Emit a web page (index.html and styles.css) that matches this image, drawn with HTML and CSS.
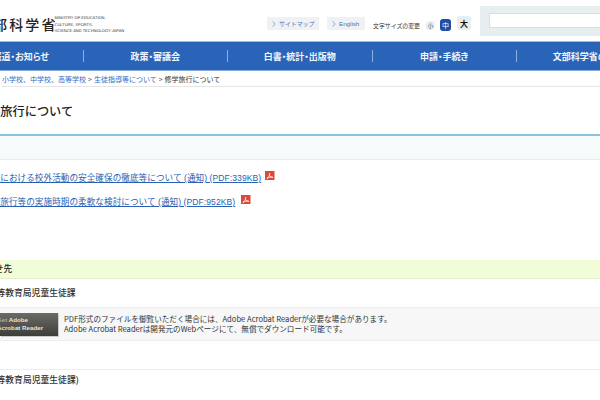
FILE: index.html
```html
<!DOCTYPE html>
<html lang="ja">
<head>
<meta charset="utf-8">
<title>修学旅行について</title>
<link rel="stylesheet" href="styles.css">
</head>
<body>
<div class="page">
  <header class="header">
    <div class="logo">
      <span class="logo-mark">文部科学省</span>
      <span class="logo-en">MINISTRY OF EDUCATION,<br>CULTURE, SPORTS,<br>SCIENCE AND TECHNOLOGY-JAPAN</span>
    </div>
    <a class="tool tool-map"><svg class="chev" viewBox="0 0 4 6"><path d="M.6.4 3.2 3 .6 5.6"/></svg>サイトマップ</a>
    <a class="tool tool-en"><svg class="chev" viewBox="0 0 4 6"><path d="M.6.4 3.2 3 .6 5.6"/></svg>English</a>
    <span class="size-label">文字サイズの変更</span>
    <span class="size size-s">小</span>
    <span class="size size-m">中</span>
    <span class="size size-l">大</span>
    <div class="search"><div class="search-input"></div></div>
  </header>
  <nav class="nav">
    <a class="nav-item">報道・お知らせ</a>
    <a class="nav-item">政策・審議会</a>
    <a class="nav-item">白書・統計・出版物</a>
    <a class="nav-item">申請・手続き</a>
    <a class="nav-item">文部科学省の紹介</a>
  </nav>
  <div class="crumbs"><a>小学校、中学校、高等学校</a><span class="sep">&gt;</span><a>生徒指導等について</a><span class="sep">&gt;</span><span>修学旅行について</span></div>
  <h1 class="title">修学旅行について</h1>
  <div class="band"></div>
  <ul class="links">
    <li class="link-a"><a>学校における校外活動の安全確保の徹底等について (通知) (PDF:339KB)</a><svg class="pdf" viewBox="0 0 10 10"><rect width="10" height="10" fill="#dc4a38"/><path d="M5 2.2C5 5 3.6 7 1.8 8M5 4.8c.6 1.2 2 2 3.4 2.2M2 7.6c2-1 4-1.5 6.2-1.2" fill="none" stroke="#fff" stroke-width=".9"/></svg></li>
    <li class="link-b"><a>修学旅行等の実施時期の柔軟な検討について (通知) (PDF:952KB)</a><svg class="pdf pdf-wide" viewBox="0 0 10 10"><rect width="10" height="10" fill="#dc4a38"/><path d="M5 2.2C5 5 3.6 7 1.8 8M5 4.8c.6 1.2 2 2 3.4 2.2M2 7.6c2-1 4-1.5 6.2-1.2" fill="none" stroke="#fff" stroke-width=".9"/></svg></li>
  </ul>
  <h2 class="contact">お問合せ先</h2>
  <p class="dept dept-a">初等中等教育局児童生徒課</p>
  <div class="reader">
    <div class="badge"><span class="badge-text"><span class="dim">Get</span> Adobe<br>Acrobat Reader</span></div>
    <p class="reader-text">PDF形式のファイルを御覧いただく場合には、Adobe Acrobat Readerが必要な場合があります。<br>Adobe Acrobat Readerは開発元のWebページにて、無償でダウンロード可能です。</p>
  </div>
  <p class="dept dept-b">(初等中等教育局児童生徒課)</p>
</div>
</body>
</html>
```
FILE: styles.css
```css
* { box-sizing: border-box; margin: 0; padding: 0; }
html, body { width: 600px; height: 400px; overflow: hidden; background: #fff; }
body { font-family: "Noto Sans CJK JP", "Liberation Sans", sans-serif; color: #333; }
.page { width: 600px; height: 400px; overflow: hidden; }

.header { height: 41px; width: 640px; display: flex; align-items: flex-start; }
.logo { width: 290px; margin-left: -23px; padding-top: 15px; display: flex; flex: none; }
.logo-mark { font-size: 14px; line-height: 18px; letter-spacing: 2.1px; color: #222; font-weight: 500; white-space: nowrap; }
.logo-en { font-size: 4px; line-height: 6.5px; margin-left: -3px; color: #333; font-family: "Liberation Sans", sans-serif; font-weight: 400; text-rendering: geometricPrecision; white-space: nowrap; }
.tool { margin-top: 17px; height: 13px; background: #eff1f3; color: #4d78c0; font-size: 5.9px; line-height: 13px; display: flex; align-items: center; gap: 3px; padding-left: 5px; white-space: nowrap; flex: none; }
.tool-map { width: 52px; margin-right: 8px; overflow: hidden; }
.tool-en { width: 38px; font-family: "Liberation Sans", sans-serif; font-size: 6.2px; }
.chev { width: 4px; height: 6px; fill: none; stroke: #6a8ac8; stroke-width: .7; flex: none; }
.size-label { margin: 21px 0 0 8px; width: 53px; font-size: 5.9px; line-height: 10px; color: #333; white-space: nowrap; flex: none; }
.size { display: flex; align-items: center; justify-content: center; flex: none; }
.size-s { width: 9px; height: 9px; margin-top: 21px; border-radius: 4px; background: #e6eff0; font-size: 5.5px; color: #444; }
.size-m { width: 11px; height: 12px; margin: 19px 0 0 5px; border-radius: 3px; background: #1e4ea6; color: #fff; font-size: 7px; }
.size-l { width: 14px; height: 14px; margin: 16px 0 0 6px; border-radius: 3px; background: #e6eff0; color: #111; font-size: 8px; font-weight: 700; }
.search { width: 130px; height: 30px; margin: 6px 0 0 9px; background: #e6eef0; padding: 7px 0 0 9px; flex: none; }
.search-input { width: 130px; height: 15px; background: #fff; border: 1px solid #ddd; }

.nav { height: 30px; width: 740px; margin-left: -61px; display: flex; background: #2a64b8; border-top: 1px solid #9dbbe0; border-bottom: 1px solid #87abdc; align-items: center; }
.nav-item { width: 144.5px; flex: none; height: 12px; display: flex; align-items: center; justify-content: center; color: #f2f6fb; font-size: 9px; font-weight: 700; font-feature-settings: "palt"; border-right: 1px solid #8fb0e0; white-space: nowrap; }
.nav-item:first-child { padding-left: 20px; }

.crumbs { height: 16px; border-bottom: 1px solid #e6e6e6; display: flex; align-items: center; margin-left: 2px; margin-right: -2px; font-size: 7px; color: #333; white-space: nowrap; }
.crumbs a { color: #2f6ac4; }
.sep { margin: 0 2px; color: #555; }

.title { margin: 15px 0 0 -24px; height: 32px; font-size: 12.2px; line-height: 18px; font-weight: 500; color: #222; white-space: nowrap; }
.band { height: 26px; background: #f5fafa; border-top: 2px solid #8fc0e0; border-bottom: 1px solid #ececec; }

.links { list-style: none; padding-top: 5px; height: 100px; }
.links li { height: 24px; display: flex; align-items: center; font-size: 8.6px; letter-spacing: .05px; font-family: "Liberation Sans", "Noto Sans CJK JP", sans-serif; color: #2a5fb4; white-space: nowrap; }
.links a { text-decoration: underline; text-underline-offset: 1px; }
.link-a { margin-left: -17px; }
.link-b { margin-left: -17px; }
.pdf { width: 9.5px; height: 9.5px; margin: -3px 0 0 4px; flex: none; }
.pdf-wide { margin-left: 6px; }

.contact { height: 19px; text-indent: -31px; background: #f1fcd8; border-bottom: 1px solid #e6eed0; font-size: 8.6px; line-height: 17px; font-weight: 500; color: #222; white-space: nowrap; }
.dept { font-size: 8.8px; line-height: 14px; color: #333; white-space: nowrap; font-weight: 500; }
.dept-a { margin: 7px 0 0 -30px; height: 21px; }
.reader { height: 34px; background: #f7f7f7; border-top: 1px solid #eee; border-bottom: 1px solid #eee; display: flex; align-items: center; margin-bottom: 28px; }
.badge { width: 58px; height: 23px; flex: none; background: linear-gradient(#6b6b66, #3d3d3a); box-shadow: 1px 1px 0 #ccc; overflow: hidden; display: flex; align-items: center; }
.badge-text { margin-left: -3px; font-family: "Liberation Sans", sans-serif; font-size: 6.2px; line-height: 8px; font-weight: 700; color: #e4e4e0; white-space: nowrap; }
.dim { color: #a8a8a2; }
.reader-text { margin-left: 6px; font-size: 7.6px; line-height: 10.5px; color: #333; white-space: nowrap; }
.dept-b { border-top: 1px solid #eee; padding: 3px 0 0 33px; margin-left: -66px; }
```
